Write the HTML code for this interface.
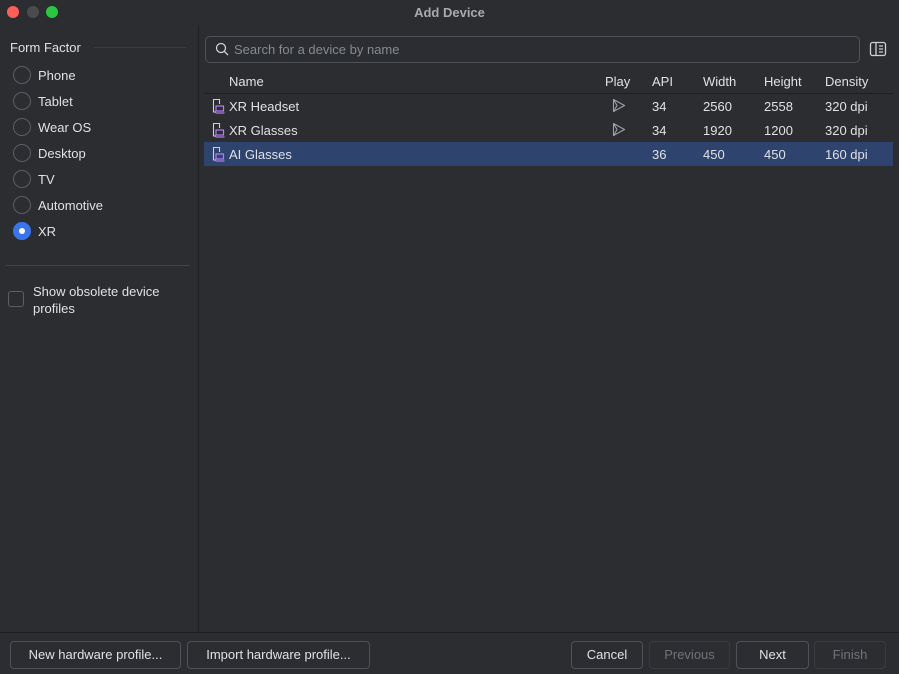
<!DOCTYPE html>
<html><head><style>
*{margin:0;padding:0;box-sizing:border-box}
body{width:899px;height:674px;background:#2b2d30;font-family:"Liberation Sans",sans-serif;color:#dfe1e5;font-size:13px;position:relative;overflow:hidden}
.a{position:absolute;white-space:nowrap}
.dot{position:absolute;top:6px;width:12px;height:12px;border-radius:50%}
.r{position:absolute;left:13px;width:18px;height:18px;border-radius:50%;border:1px solid #5a5d63}
.btn{position:absolute;top:641px;height:28px;border:1px solid #4e5157;border-radius:4px;text-align:center;line-height:26px;font-size:13px}
.ic{position:absolute;left:211px}
</style></head><body>
<div class="dot" style="left:7px;background:#fe5f57"></div>
<div class="dot" style="left:27px;background:#4a4b4f"></div>
<div class="dot" style="left:46px;background:#28c840"></div>
<div class="a" style="left:0;width:899px;top:5px;text-align:center;font-weight:bold;color:#a8aaae">Add Device</div>
<div class="a" style="left:198px;top:25px;width:1px;height:607px;background:#1e1f22"></div>
<div class="a" style="left:0;top:632px;width:899px;height:1px;background:#1e1f22"></div>
<div class="a" style="left:10px;top:40px">Form Factor</div>
<div class="a" style="left:94px;top:47px;width:92px;height:1px;background:#393b40"></div>
<div class="r" style="top:66px"></div><div class="a" style="left:38px;top:68px">Phone</div>
<div class="r" style="top:92px"></div><div class="a" style="left:38px;top:94px">Tablet</div>
<div class="r" style="top:118px"></div><div class="a" style="left:38px;top:120px">Wear OS</div>
<div class="r" style="top:144px"></div><div class="a" style="left:38px;top:146px">Desktop</div>
<div class="r" style="top:170px"></div><div class="a" style="left:38px;top:172px">TV</div>
<div class="r" style="top:196px"></div><div class="a" style="left:38px;top:198px">Automotive</div>
<div class="r" style="top:222px;background:#3874f0;border-color:#3874f0"><div style="position:absolute;left:5px;top:5px;width:6px;height:6px;border-radius:50%;background:#fff"></div></div>
<div class="a" style="left:38px;top:224px">XR</div>
<div class="a" style="left:6px;top:265px;width:184px;height:1px;background:#43454a"></div>
<div class="a" style="left:8px;top:291px;width:16px;height:16px;border:1px solid #5a5d63;border-radius:3px"></div>
<div class="a" style="left:33px;top:283px;line-height:17px">Show obsolete device<br>profiles</div>
<div class="a" style="left:205px;top:36px;width:655px;height:27px;border:1px solid #4e5157;border-radius:5px"></div>
<svg class="a" style="left:215px;top:42px" width="14" height="14" viewBox="0 0 14 14"><circle cx="6" cy="6" r="4.5" fill="none" stroke="#ced0d6" stroke-width="1.3"/><path d="M9.3 9.3L13 13" stroke="#ced0d6" stroke-width="1.3"/></svg>
<div class="a" style="left:234px;top:42px;color:#868a91">Search for a device by name</div>
<svg class="a" style="left:869px;top:41px" width="18" height="16" viewBox="0 0 18 16"><rect x="1.5" y="1.5" width="15" height="13" rx="2" fill="none" stroke="#ced0d6" stroke-width="1.3"/><path d="M7 2v12M10 5h4M10 8h4M10 11h4" stroke="#ced0d6" stroke-width="1.3"/></svg>
<div class="a" style="left:229px;top:74px">Name</div>
<div class="a" style="left:605px;top:74px">Play</div>
<div class="a" style="left:652px;top:74px">API</div>
<div class="a" style="left:703px;top:74px">Width</div>
<div class="a" style="left:764px;top:74px">Height</div>
<div class="a" style="left:825px;top:74px">Density</div>
<div class="a" style="left:204px;top:93px;width:690px;height:1px;background:#1e1f22"></div>
<div class="a" style="left:204px;top:142px;width:689px;height:24px;background:#2e436e"></div>
<svg class="ic" style="top:98px" width="14" height="16" viewBox="0 0 14 16"><path d="M5 14H2.5V1.5h6V6" fill="none" stroke="#ced0d6" stroke-width="1.1"/><rect x="5" y="8" width="7.5" height="5" fill="none" stroke="#b57cf7" stroke-width="1.2"/><path d="M4.5 15h9" stroke="#b57cf7" stroke-width="1.2"/></svg>
<svg class="ic" style="top:122px" width="14" height="16" viewBox="0 0 14 16"><path d="M5 14H2.5V1.5h6V6" fill="none" stroke="#ced0d6" stroke-width="1.1"/><rect x="5" y="8" width="7.5" height="5" fill="none" stroke="#b57cf7" stroke-width="1.2"/><path d="M4.5 15h9" stroke="#b57cf7" stroke-width="1.2"/></svg>
<svg class="ic" style="top:146px" width="14" height="16" viewBox="0 0 14 16"><path d="M5 14H2.5V1.5h6V6" fill="none" stroke="#ced0d6" stroke-width="1.1"/><rect x="5" y="8" width="7.5" height="5" fill="none" stroke="#b57cf7" stroke-width="1.2"/><path d="M4.5 15h9" stroke="#b57cf7" stroke-width="1.2"/></svg>
<div class="a" style="left:229px;top:99px">XR Headset</div>
<div class="a" style="left:229px;top:123px">XR Glasses</div>
<div class="a" style="left:229px;top:147px">AI Glasses</div>
<svg class="a" style="left:612px;top:98px" width="14" height="15" viewBox="0 0 14 15"><path d="M1.5 1.5L12.5 7.5L1.5 13.5Z M1.5 1.5L5 7.5L1.5 13.5" fill="none" stroke="#9da0a8" stroke-width="1.1" stroke-linejoin="round"/></svg>
<svg class="a" style="left:612px;top:122px" width="14" height="15" viewBox="0 0 14 15"><path d="M1.5 1.5L12.5 7.5L1.5 13.5Z M1.5 1.5L5 7.5L1.5 13.5" fill="none" stroke="#9da0a8" stroke-width="1.1" stroke-linejoin="round"/></svg>
<div class="a" style="left:652px;top:99px">34</div><div class="a" style="left:703px;top:99px">2560</div><div class="a" style="left:764px;top:99px">2558</div><div class="a" style="left:825px;top:99px">320 dpi</div>
<div class="a" style="left:652px;top:123px">34</div><div class="a" style="left:703px;top:123px">1920</div><div class="a" style="left:764px;top:123px">1200</div><div class="a" style="left:825px;top:123px">320 dpi</div>
<div class="a" style="left:652px;top:147px">36</div><div class="a" style="left:703px;top:147px">450</div><div class="a" style="left:764px;top:147px">450</div><div class="a" style="left:825px;top:147px">160 dpi</div>
<div class="btn" style="left:10px;width:171px">New hardware profile...</div>
<div class="btn" style="left:187px;width:183px">Import hardware profile...</div>
<div class="btn" style="left:571px;width:72px">Cancel</div>
<div class="btn" style="left:649px;width:81px;color:#6f737a;border-color:#393b40">Previous</div>
<div class="btn" style="left:736px;width:73px">Next</div>
<div class="btn" style="left:814px;width:72px;color:#6f737a;border-color:#393b40">Finish</div>
</body></html>
